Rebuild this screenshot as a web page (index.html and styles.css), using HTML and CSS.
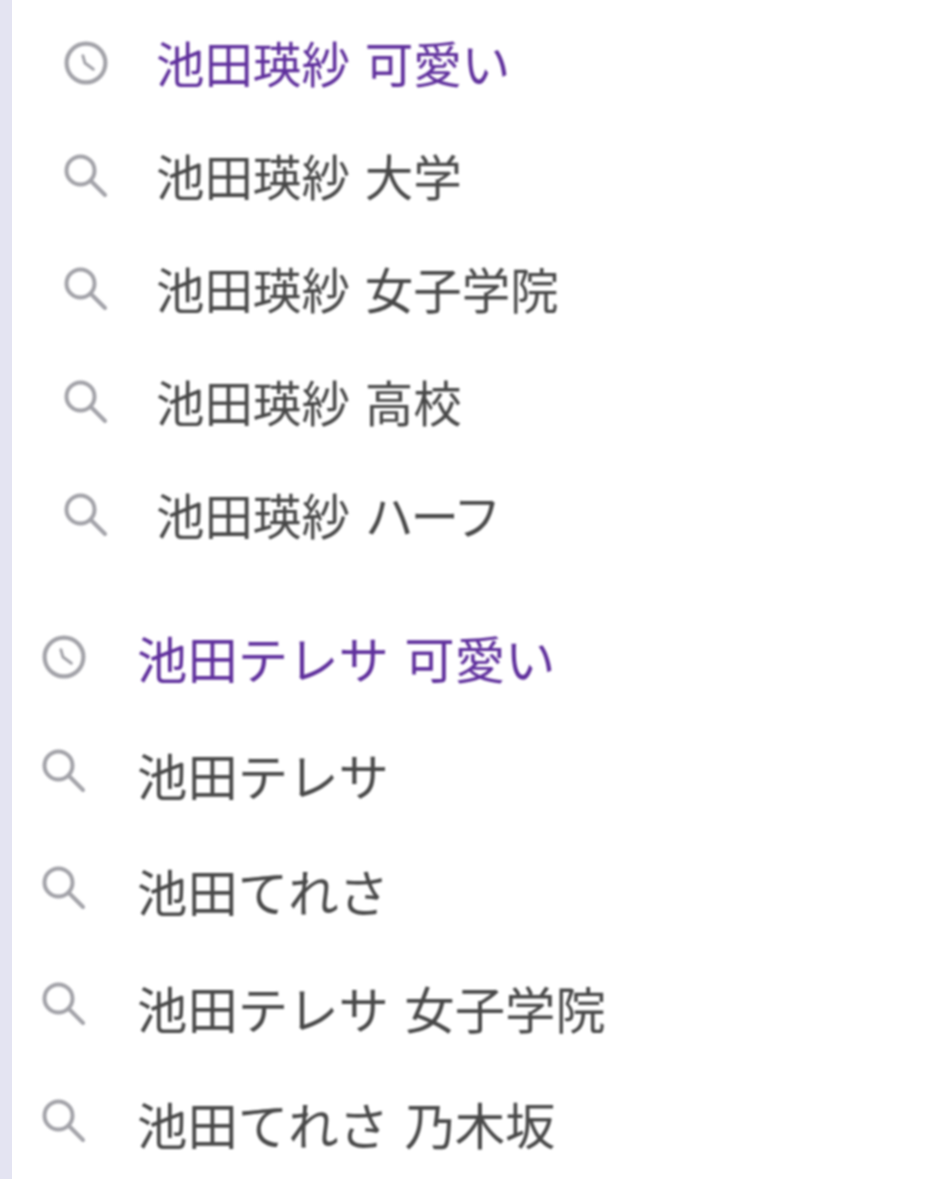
FILE: index.html
```html
<!DOCTYPE html>
<html lang="ja">
<head>
    <meta charset="UTF-8">
    <title>池田瑛紗</title>
    <link rel="stylesheet" href="styles.css">
</head>
<body>
  <svg class="defs" width="0" height="0">
    <symbol id="clock" viewBox="0 0 42 42">
      <circle cx="21" cy="21" r="18.5"/>
      <path class="hands" d="M18 14 L20 21 L28 27"/>
    </symbol>
    <symbol id="search" viewBox="0 0 44 44">
      <circle cx="16.5" cy="16.5" r="14"/>
      <path d="M27 27 L41 41"/>
    </symbol>
  </svg>
  <div class="page">
    <ul class="list first">
      <li class="row visited"><svg class="icon"><use href="#clock"/></svg><span>池田瑛紗 可愛い</span></li>
      <li class="row"><svg class="icon"><use href="#search"/></svg><span>池田瑛紗 大学</span></li>
      <li class="row"><svg class="icon"><use href="#search"/></svg><span>池田瑛紗 女子学院</span></li>
      <li class="row"><svg class="icon"><use href="#search"/></svg><span>池田瑛紗 高校</span></li>
      <li class="row"><svg class="icon"><use href="#search"/></svg><span>池田瑛紗 <span class="tight">ハーフ</span></span></li>
    </ul>
    <ul class="list second">
      <li class="row visited"><svg class="icon"><use href="#clock"/></svg><span>池田テレサ 可愛い</span></li>
      <li class="row"><svg class="icon"><use href="#search"/></svg><span>池田テレサ</span></li>
      <li class="row"><svg class="icon"><use href="#search"/></svg><span>池田てれさ</span></li>
      <li class="row"><svg class="icon"><use href="#search"/></svg><span>池田テレサ 女子学院</span></li>
      <li class="row"><svg class="icon"><use href="#search"/></svg><span>池田てれさ 乃木坂</span></li>
    </ul>
  </div>
</body>
</html>
```

FILE: styles.css
```css
html, body {
  margin: 0;
  height: 100%;
  background: #fff;
  overflow: hidden;
}
body {
  border-left: 12px solid #e4e4f2;
  font-family: "Noto Sans CJK JP", "Noto Sans", sans-serif;
  color: #484848;
}
.defs {
  display: block;
  height: 0;
}
.page {
  filter: blur(0.9px);
}
.list {
  list-style: none;
  margin: 0;
}
.first {
  padding: 6px 0 0 52px;
  font-size: 48.5px;
  --row: 113px;
  --gap: 48px;
  --icon-shift: 0px;
}
.second {
  padding: 29px 0 0 30px;
  font-size: 50.4px;
  --row: 116.5px;
  --gap: 51px;
  --icon-shift: -7px;
}
.second .visited {
  --icon-shift: -2px;
}
.row {
  display: flex;
  align-items: center;
  height: var(--row);
  gap: var(--gap);
  line-height: 1;
  word-spacing: 4px;
  white-space: nowrap;
}
.icon {
  width: 44px;
  height: 44px;
  flex: none;
  fill: none;
  stroke: #a2a2a8;
  stroke-width: 4px;
  stroke-linecap: round;
  margin-top: var(--icon-shift);
}
.hands {
  stroke-width: 2.8px;
}
.tight {
  letter-spacing: -3px;
}
.visited {
  color: #5f2f9c;
}
```
